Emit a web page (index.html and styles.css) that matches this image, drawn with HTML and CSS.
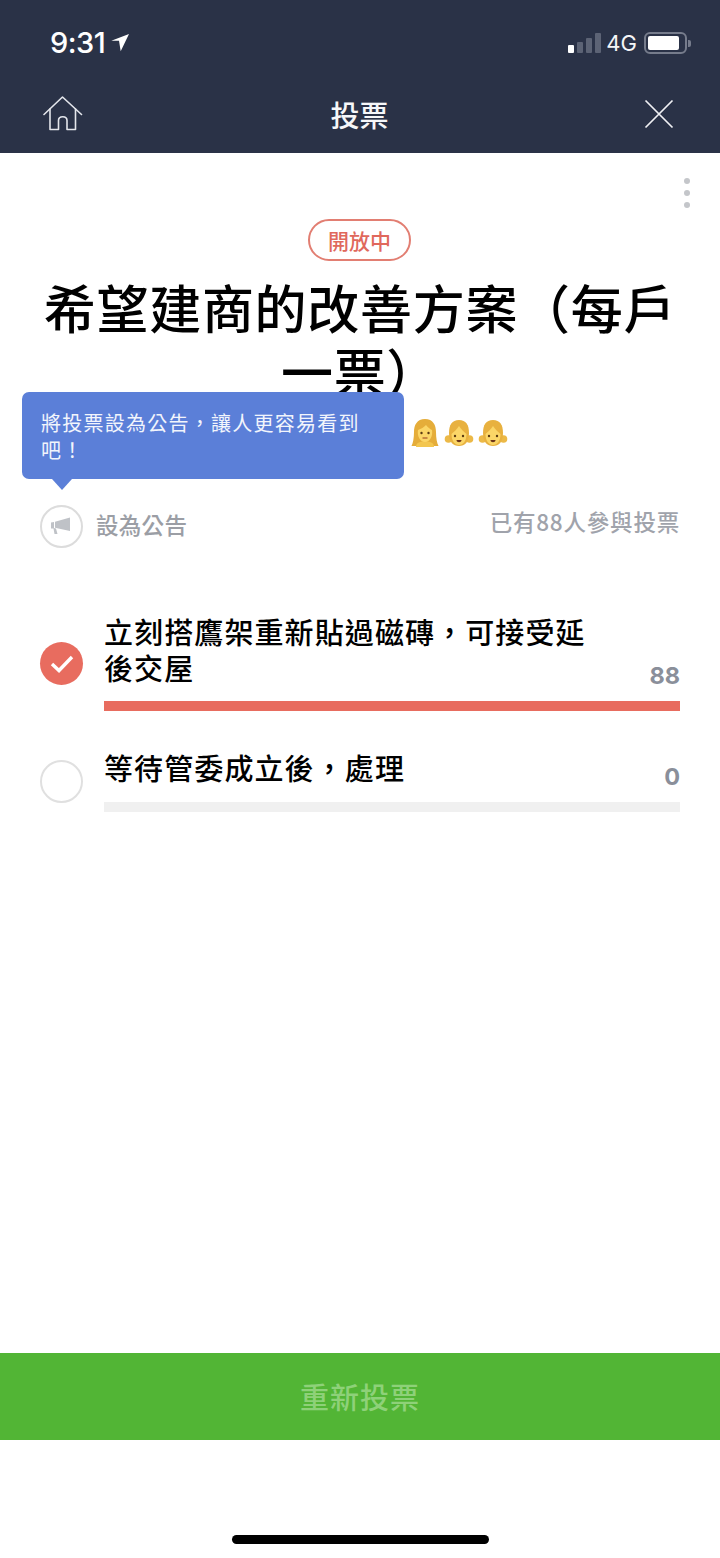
FILE: index.html
```html
<!DOCTYPE html>
<html>
<head>
<meta charset="utf-8">
<title>投票</title>
<link rel="stylesheet" href="styles.css">
</head>
<body>

<div class="page">
  <div class="statusbar">
    <div class="clock">9:31
      <svg class="arrow" width="18" height="19" viewBox="0 0 18 19"><path d="M0.300 7.700L18 1L9.700 18.300L8 7.700Z" fill="#fff"/></svg>
    </div>
    <div class="sysicons">
      <div class="signal"><i class="on"></i><i></i><i></i><i></i></div>
      <span class="net">4G</span>
      <div class="battery"><div class="battery-fill"></div></div>
      <div class="battery-tip"></div>
    </div>
  </div>

  <div class="navbar">
    <svg class="navicon home" width="40" height="36" viewBox="0 0 40 36" fill="none" stroke="#e4e6ec" stroke-width="1.6" stroke-linejoin="round" stroke-linecap="round">
      <path d="M1 18.5L19.5 1L38.500 18.500"/>
      <path d="M7 13V33.500H15.500V24.500C15.500 19.500 24 19.500 24 24.500V33.500H32.500V13"/>
    </svg>
    <div class="navtitle">投票</div>
    <svg class="navicon close" width="30" height="30" viewBox="0 0 30 30" fill="none" stroke="#f0f1f4" stroke-width="1.700"><path d="M1.500 1.500L28.500 28.500M28.500 1.500L1.500 28.500"/></svg>
  </div>

  <div class="content">
    <div class="moredots"><i></i><i></i><i></i></div>
    <div class="badge-row"><span class="badge">開放中</span></div>
    <h1 class="title">希望建商的改善方案（每戶一票）</h1>

    <div class="voters">
      <svg class="face" width="30" height="30" viewBox="0 0 30 30"><use href="#woman"/></svg>
      <svg class="face" width="30" height="30" viewBox="0 0 30 30"><use href="#girl"/></svg>
      <svg class="face" width="30" height="30" viewBox="0 0 30 30"><use href="#girl"/></svg>
    </div>

    <div class="meta">
      <div class="announce">
        <span class="announce-circle">
          <svg width="20" height="18" viewBox="0 0 20 18"><path d="M0 5.500L3 5V11L5 11.500L6.500 17H3.500L2.500 11.500H0ZM4 4.800L19 0.500V14L4 10.800Z" fill="#bfc2c7"/></svg>
        </span>
        <span class="announce-label">設為公告</span>
      </div>
      <div class="count">已有88人參與投票</div>
    </div>

    <div class="option first">
      <span class="tick checked">
        <svg width="24" height="20" viewBox="0 0 24 20" fill="none" stroke="#fff" stroke-width="3.400"><path d="M2 10L9 16.500L22 3"/></svg>
      </span>
      <div class="option-body">
        <div class="option-top">
          <div class="option-text">立刻搭鷹架重新貼過磁磚，可接受延後交屋</div>
          <div class="option-num">88</div>
        </div>
        <div class="bar"><div class="bar-fill" style="width:100%"></div></div>
      </div>
    </div>

    <div class="option second">
      <span class="tick"></span>
      <div class="option-body">
        <div class="option-top">
          <div class="option-text">等待管委成立後，處理</div>
          <div class="option-num">0</div>
        </div>
        <div class="bar"><div class="bar-fill" style="width:0%"></div></div>
      </div>
    </div>

    <div class="tooltip">將投票設為公告，讓人更容易看到吧！</div>
  </div>

  <div class="revote">重新投票</div>
  <div class="homearea"><div class="homebar"></div></div>
</div>

<svg class="defs" width="0" height="0">
  <defs>
    <symbol id="woman" viewBox="0 0 30 30">
      <path d="M15 1C7 1 4 7 4 14C4 20 3 25 1.500 28H28.500C27 25 26 20 26 14C26 7 23 1 15 1Z" fill="#e5ad3a"/>
      <path d="M6 29C6 25 9 23.500 15 23.500C21 23.500 24 25 24 29Z" fill="#f3c64f"/>
      <path d="M8 12C11 11 14 9 16 7C18 9.500 20 11 22 12C23 18 20 24 15 24C10 24 7 18 8 12Z" fill="#fbd667"/>
      <circle cx="11.500" cy="15" r="1.200" fill="#5a3a12"/><circle cx="18.500" cy="15" r="1.200" fill="#5a3a12"/>
      <path d="M12.500 20H17.500" stroke="#a8552a" stroke-width="1.200"/>
    </symbol>
    <symbol id="girl" viewBox="0 0 30 30">
      <circle cx="4.500" cy="21" r="3.800" fill="#ecb947"/><circle cx="25.500" cy="21" r="3.800" fill="#ecb947"/>
      <path d="M15 2C8 2 5 7 5 15C5 24 9 28 15 28C21 28 25 24 25 15C25 7 22 2 15 2Z" fill="#e8b13f"/>
      <path d="M7.500 16C10 14 13 11 15 8C17 11 20 14 22.500 16C22.500 23 19 27 15 27C11 27 7.500 23 7.500 16Z" fill="#fbd667"/>
      <circle cx="11" cy="18" r="1.200" fill="#5a3a12"/><circle cx="19" cy="18" r="1.200" fill="#5a3a12"/>
      <path d="M12.500 22H17.500C17.500 25 12.500 25 12.500 22Z" fill="#6d3418"/>
    </symbol>
  </defs>
</svg>

</body>
</html>
```

FILE: styles.css
```css
* { box-sizing: border-box; }
html, body { margin: 0; padding: 0; background: #fff; }
body { font-family: "Noto Sans CJK TC", "Noto Sans", sans-serif; color: #000; }

.page { width: 720px; height: 1558px; display: flex; flex-direction: column; overflow: hidden; }
.defs { display: block; height: 0; }

/* top of the phone */
.statusbar { height: 76px; background: #2a3247; display: flex; justify-content: space-between; padding: 23px 30px 0 50px; color: #fff; }
.clock { display: flex; gap: 6px; font-family: Inter, "Liberation Sans", sans-serif; font-size: 29px; line-height: 40px; font-weight: 500; letter-spacing: -0.5px; }
.arrow { margin-top: 10px; }
.sysicons { display: flex; align-items: center; height: 40px; }
.signal { display: flex; align-items: flex-end; gap: 3px; height: 20px; margin-right: 5px; }
.signal i { display: block; width: 6px; background: #5c6375; border-radius: 1px; }
.signal i:nth-child(1) { height: 8px; background: #fff; }
.signal i:nth-child(2) { height: 11px; }
.signal i:nth-child(3) { height: 15px; }
.signal i:nth-child(4) { height: 20px; }
.net { font-family: Inter, "Liberation Sans", sans-serif; font-size: 22px; color: #f4f5f7; margin-right: 7px; }
.battery { width: 43px; height: 22px; border: 2px solid #767c8c; border-radius: 6px; padding: 2px; }
.battery-fill { width: 31px; height: 14px; background: #fff; border-radius: 2px; }
.battery-tip { width: 3px; height: 7px; background: #767c8c; margin: 0 -1px 0 1px; border-radius: 0 2px 2px 0; }

.navbar { height: 77px; background: #2a3247; display: grid; grid-template-columns: 1fr auto 1fr; align-items: center; padding: 0 46px 0 43px; }
.navicon { display: block; margin-top: -1px; }
.navicon.close { justify-self: end; }
.navtitle { font-size: 29px; font-weight: 500; color: #f6f7f9; line-height: 40px; margin: -1px 0 0 2px; }

/* main area */
.content { flex: 1; position: relative; padding: 25px 40px 0; }
.moredots { display: flex; flex-direction: column; gap: 6px; align-items: flex-end; margin-right: -10px; height: 41px; }
.moredots i { display: block; width: 6px; height: 6px; border-radius: 50%; background: #c4c6ca; }

.badge-row { display: flex; justify-content: center; }
.badge { width: 103px; height: 42px; border: 2px solid #e27e72; border-radius: 21px; color: #e0685c; font-size: 21px; font-weight: 500; line-height: 38px; text-align: center; margin-left: -1px; }

.title { margin: 14px -10px 0; font-size: 52px; line-height: 64px; font-weight: 500; text-align: center; letter-spacing: 0.700px; height: 128px; }

.voters { display: flex; justify-content: flex-start; gap: 4px; margin: 15px 0 0 370px; height: 30px; }

.meta { display: flex; justify-content: space-between; margin: 56px 0 0; height: 44px; }
.announce { display: flex; align-items: center; gap: 13px; }
.announce-circle { width: 43px; height: 43px; border: 2px solid #dcdcdc; border-radius: 50%; display: flex; align-items: center; justify-content: center; padding-right: 2px; }
.announce-label { font-size: 22.500px; color: #9b9ea5; font-weight: 500; margin-top: -4px; letter-spacing: 0.300px; }
.count { font-size: 22.500px; color: #a0a3ab; font-weight: 500; letter-spacing: 0.800px; margin-top: -1px; line-height: 36px; }

.option { display: flex; gap: 21px; position: relative; }
.option.first { margin-top: 65px; }
.option.second { margin-top: 38px; }
.tick { flex: none; width: 43px; height: 43px; border: 2px solid #e0e0e0; border-radius: 50%; display: flex; align-items: center; justify-content: center; }
.first .tick { margin-top: 29px; }
.second .tick { margin-top: 11px; }
.tick.checked { background: #e86c5f; border: 0; }
.option-body { flex: 1; }
.option-top { display: flex; justify-content: space-between; align-items: flex-end; }
.option-text { width: 490px; font-size: 29px; line-height: 36px; font-weight: 500; letter-spacing: 1.100px; }
.option-num { font-size: 23.500px; line-height: 34px; font-weight: 700; color: #8a8f9a; font-family: Inter, "Noto Sans", sans-serif; margin-bottom: -8px; }
.second .option-num { margin-bottom: -9px; }
.bar { height: 10px; background: #f0f0f0; margin-top: 16px; }
.second .bar { margin-top: 17px; }
.bar-fill { height: 100%; background: #e86c5f; }

.tooltip { position: absolute; left: 22px; top: 239px; width: 382px; height: 87px; background: #5b7fd8; border-radius: 7px; color: #f2f5fc; font-size: 20px; line-height: 27px; padding: 17px 19px 0; letter-spacing: 1.250px; }
.tooltip::after { content: ""; position: absolute; left: 30px; top: 87px; border-left: 10px solid transparent; border-right: 10px solid transparent; border-top: 11px solid #5b7fd8; }

.revote { height: 87px; background: #52b535; color: #8ed179; font-size: 29px; font-weight: 500; line-height: 87px; text-align: center; letter-spacing: 1px; }
.homearea { height: 118px; display: flex; justify-content: center; padding-top: 95px; }
.homebar { width: 257px; height: 9px; border-radius: 5px; background: #000; }
```
